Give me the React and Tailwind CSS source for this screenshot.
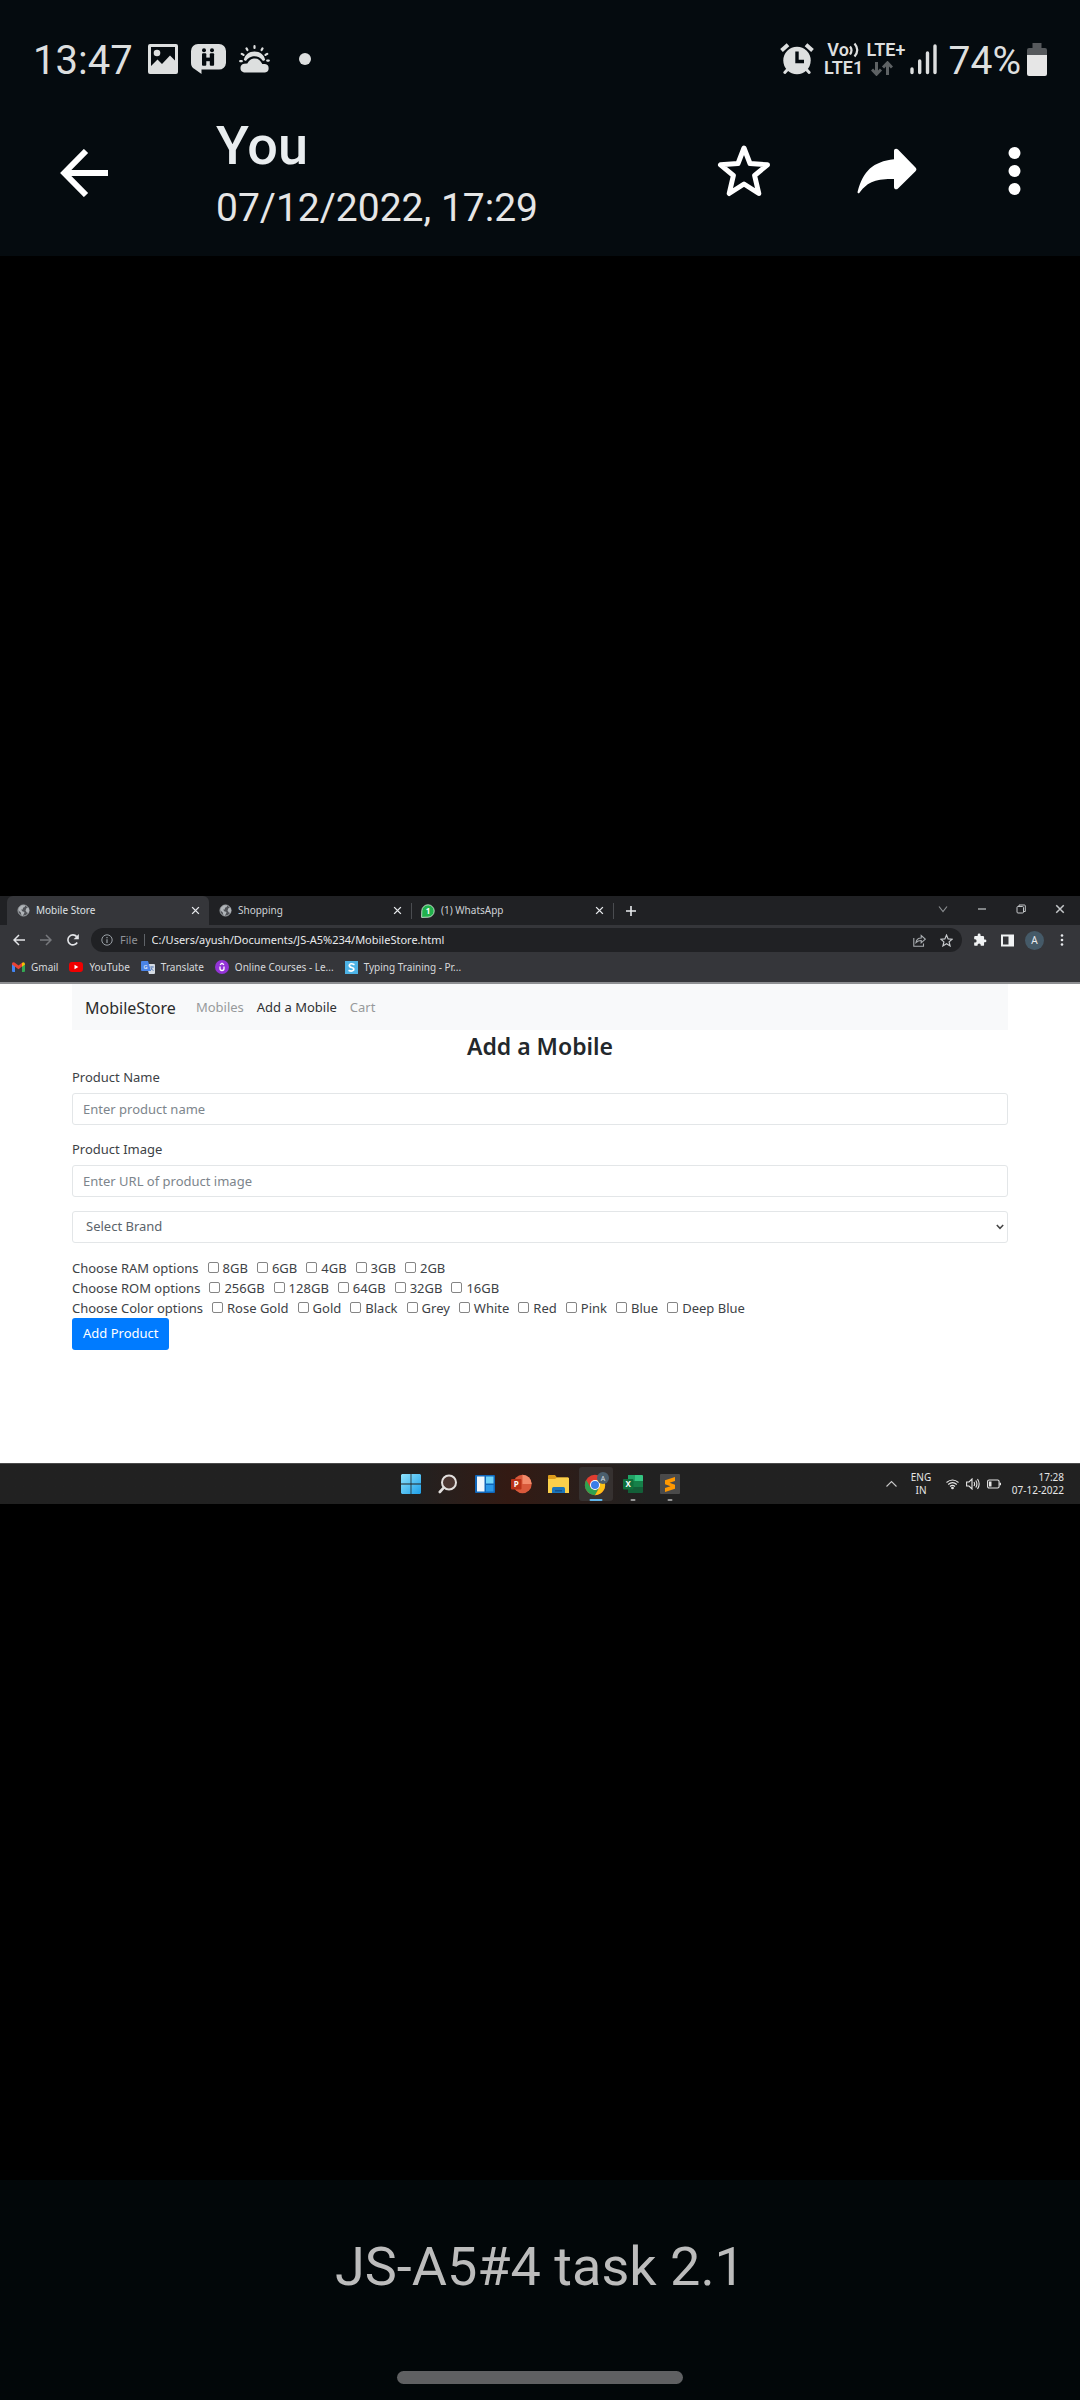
import React from "react";

const ui = "font-['Noto_Sans','Open_Sans',sans-serif]";

/* ---------- phone status bar icons ---------- */

function PictureIcon() {
  return (
    <svg className="h-[30px] w-[30px]" viewBox="0 0 30 30" aria-hidden="true">
      <path fill="#dddfdf" fillRule="evenodd" d="M2 0H28a2 2 0 0 1 2 2V28a2 2 0 0 1-2 2H2a2 2 0 0 1-2-2V2a2 2 0 0 1 2-2ZM3 3V22L9.500 15.500 14 20 22 11.500 27 16.500V3Z" />
      <circle cx="9" cy="9" r="3.300" fill="#dddfdf" />
    </svg>
  );
}

function HBubbleIcon() {
  return (
    <svg className="h-[30px] w-[35px]" viewBox="0 0 35 30" aria-hidden="true">
      <path fill="#dddfdf" d="M7 0H28a7 7 0 0 1 7 7V19a7 7 0 0 1-7 6.500H10.500V30L3.500 25A7 7 0 0 1 0 19V7A7 7 0 0 1 7 0Z" />
      <g fill="#050b0f">
        <circle cx="13" cy="6.300" r="2" />
        <circle cx="21" cy="6.300" r="2" />
        <rect x="11" y="9.300" width="4.300" height="12.500" rx="1" />
        <rect x="18.800" y="9.300" width="4.300" height="12.500" rx="1" />
        <rect x="14" y="13.600" width="6" height="3.600" />
      </g>
    </svg>
  );
}

function WeatherIcon() {
  return (
    <svg className="h-[28px] w-[31px]" viewBox="0 0 31 28" aria-hidden="true">
      <g stroke="#dddfdf" strokeWidth="2.200" strokeLinecap="round">
        <path d="M15.500 1.200V3M7.500 3.400 8.400 5M23.500 3.400 22.600 5M2.800 8.800 4.500 9.900M28.200 8.800 26.500 9.900M1.200 16.200H2.800M29.800 15.600H28.200" />
      </g>
      <path fill="#dddfdf" d="M4.800 15C6 9.500 10 6.500 15.500 6.500S25 9.500 26.200 15L24 16C21.500 12.500 18.500 11.200 15.500 11.200S8.500 13 7 16Z" />
      <path fill="#dddfdf" d="M5 27.500A4.500 4.500 0 0 1 5 18.700L8.300 18.600C10.500 14.500 13 13.500 15.800 13.500 19.500 13.500 21.500 15.500 23.300 19H26A4.300 4.300 0 0 1 26 27.500Z" />
    </svg>
  );
}

function AlarmIcon() {
  return (
    <svg className="h-[32px] w-[34px]" viewBox="0 0 34 32" aria-hidden="true">
      <g stroke="#dddfdf" strokeWidth="4">
        <path d="M1.500 7.500 8 1.800M32.500 7.500 26 1.800" />
        <path strokeWidth="3" strokeLinecap="round" d="M8 26 4.800 29.500M26 26 29.200 29.500" />
      </g>
      <circle cx="17" cy="17.500" r="13.700" fill="#dddfdf" />
      <path d="M17 8.500V18.500H24" fill="none" stroke="#050b0f" strokeWidth="3.400" />
    </svg>
  );
}

function SignalIcon() {
  return (
    <svg className="h-[31px] w-[27px]" viewBox="0 0 27 31" aria-hidden="true">
      <g stroke="#dddfdf" strokeWidth="3.400" strokeLinecap="round">
        <path d="M2 25V28.500M9.700 17V28.500M17.500 9V28.500M25 2V28.500" />
      </g>
    </svg>
  );
}

function DataArrows() {
  return (
    <svg className="h-[15px] w-[22px]" viewBox="0 0 22 15" aria-hidden="true">
      <path d="M5.500 1V13M1 8.500 5.500 13.200 10 8.500M16.500 14V2M12 6.500 16.500 1.800 21 6.500" fill="none" stroke="#5e6264" strokeWidth="3" />
    </svg>
  );
}

function BatteryIcon() {
  return (
    <svg className="h-[33px] w-[20px]" viewBox="0 0 20 33" aria-hidden="true">
      <path fill="#56595c" d="M5.500 0H14.500V5H18a2 2 0 0 1 2 2V14H0V7A2 2 0 0 1 2 5H5.500Z" />
      <path fill="#e6e6e6" d="M0 12H20V31a2 2 0 0 1-2 2H2a2 2 0 0 1-2-2Z" />
    </svg>
  );
}

function StatusBar() {
  return (
    <div className="flex h-12 items-center justify-between pl-[33px] pr-[33px] text-[#dddfdf]">
      <div className="flex items-center">
        <span className="w-[115px] text-[40px] leading-[48px]">13:47</span>
        <div className="flex items-center gap-[13px] pb-1">
          <PictureIcon />
          <HBubbleIcon />
          <WeatherIcon />
          <span className="ml-4 h-3 w-3 rounded-full bg-[#dddfdf]" />
        </div>
      </div>
      <div className="flex items-center">
        <span className="pb-1"><AlarmIcon /></span>
        <div className="ml-[11px] flex gap-1 pb-1 font-['Roboto',sans-serif] text-[18px] font-semibold leading-[18px]">
          <div className="flex w-[38px] flex-col items-center">
            <span className="flex h-[18px] items-center">
              Vo
              <svg className="h-[16px] w-[11px]" viewBox="0 0 11 16" aria-hidden="true">
                <path d="M1 4.500Q4 8 1 12.500M5.500 1.500Q11 8 5.500 14.500" fill="none" stroke="#dddfdf" strokeWidth="2.200" />
              </svg>
            </span>
            <span className="h-[18px]">LTE1</span>
          </div>
          <div className="flex w-9 flex-col">
            <span className="h-[18px] whitespace-nowrap">LTE+</span>
            <span className="flex h-[18px] items-center pl-1"><DataArrows /></span>
          </div>
        </div>
        <span className="ml-[7px] pb-1"><SignalIcon /></span>
        <span className="ml-3 text-[39px] leading-[48px]">74%</span>
        <span className="ml-[6px] pb-1"><BatteryIcon /></span>
      </div>
    </div>
  );
}

function ViewerHeader() {
  return (
    <header className="bg-[#050b0f] pb-[26px] pt-[37px]">
      <StatusBar />
      <div className="mt-[31px] flex items-center pl-[60px] pr-[59px]">
        <button type="button" aria-label="Back" className="mr-[108px]">
          <svg className="h-[48px] w-[48px]" viewBox="0 0 48 48" fill="none" stroke="#fff" strokeWidth="6" aria-hidden="true">
            <path d="M48 24H6M26 2 4.300 24 26 46" />
          </svg>
        </button>
        <div className="flex-1">
          <h1 className="text-[54px] font-medium leading-[60px] text-[#e9edef]">You</h1>
          <p className="mt-[10px] text-[39px] leading-[44px] text-[#e6e6e6]">07/12/2022, 17:29</p>
        </div>
        <div className="flex items-center pb-1">
          <button type="button" aria-label="Star message">
            <svg className="h-[52px] w-[54px]" viewBox="0 0 54 52" fill="none" stroke="#fff" strokeWidth="5" strokeLinejoin="round" aria-hidden="true">
              <path d="M27 3 33 18.500 50.500 19.800 37.600 30.500 41.800 48.500 27 39 12.200 48.500 16.400 30.500 3.500 19.800 21 18.500Z" />
            </svg>
          </button>
          <button type="button" aria-label="Share" className="ml-[86px]">
            <svg className="h-[46px] w-[60px]" viewBox="0 0 60 46" fill="#fff" aria-hidden="true">
              <path d="M37 11.200V3C37 .500 39.500 0 41 1.500L58.500 19.500C59.700 20.800 59.700 22 58.500 23.300L41 40.500C39.500 42 37 41.500 37 39V31C20 31 11 33 2.500 44.800 1.500 46 .200 45 .600 43.800 6 23 16 13.500 37 11.200Z" />
            </svg>
          </button>
          <button type="button" aria-label="More options" className="ml-[91px]">
            <svg className="h-[50px] w-[13px]" viewBox="0 0 13 50" fill="#fff" aria-hidden="true">
              <circle cx="6.500" cy="7" r="6" />
              <circle cx="6.500" cy="25" r="6" />
              <circle cx="6.500" cy="43" r="6" />
            </svg>
          </button>
        </div>
      </div>
    </header>
  );
}

/* ---------- browser chrome ---------- */

function Globe() {
  return (
    <svg className="h-[13px] w-[13px] shrink-0" viewBox="0 0 13 13" aria-hidden="true">
      <circle cx="6.500" cy="6.500" r="5.500" fill="#505257" stroke="#a4a8ac" strokeWidth="1" />
      <path fill="#b0b4b8" d="M4.800 1.200 8 1.300 7.800 3 6 3.800 5.800 5.500H4.200L5.200 7.200 7.500 8 7 9.800 5.500 12 4.200 10.500 3.800 8.500 1.200 6.200 2.200 3.200ZM9.500 4 11.500 3.800 12.300 6.500 11.500 9 9.800 8.500 8.500 6.500Z" />
    </svg>
  );
}

function ChatFavicon() {
  return (
    <svg className="h-[14px] w-[14px] shrink-0" viewBox="0 0 14 14" aria-hidden="true">
      <path fill="#22b14c" stroke="#dff5e4" strokeWidth=".8" d="M.6 13.400.800 6.800A6.200 6.200 0 1 1 7 13.200Z" />
      <text x="7" y="10" fill="#fff" fontSize="8" fontWeight="700" textAnchor="middle" fontFamily="Noto Sans">1</text>
    </svg>
  );
}

function CrossIcon({ size }) {
  return (
    <svg className={size} viewBox="0 0 8 8" fill="none" stroke="currentColor" strokeWidth="1.200" aria-hidden="true">
      <path d="M1 1 7 7M7 1 1 7" />
    </svg>
  );
}

function Tab({ icon, title, active, divider }) {
  return (
    <div className={"flex h-[29px] w-[202px] items-center pl-[10px] pr-[8px] text-[10px] " + (active ? "rounded-t-[6px] bg-[#35363a] text-[#dfe1e5]" : "text-[#cfd2d6]")}>
      <button type="button" className="flex flex-1 items-center gap-[6px] text-left">
        {icon}
        <span className="whitespace-nowrap">{title}</span>
      </button>
      <button type="button" aria-label={"Close " + title} className="text-[#e8eaed]">
        <CrossIcon size="h-[9px] w-[9px]" />
      </button>
      <span className={"-mr-[9px] ml-[9px] h-4 w-px " + (divider ? "bg-[#4a4c50]" : "")} />
    </div>
  );
}

function TabStrip() {
  return (
    <div className="flex h-[29px] items-center bg-[#202124] pl-[7px]">
      <Tab active icon={<Globe />} title="Mobile Store" />
      <Tab divider icon={<Globe />} title="Shopping" />
      <Tab divider icon={<ChatFavicon />} title="(1) WhatsApp" />
      <button type="button" aria-label="New tab" className="ml-[13px]">
        <svg className="h-[10px] w-[10px]" viewBox="0 0 10 10" stroke="#e8eaed" strokeWidth="1.600" aria-hidden="true">
          <path d="M5 0V10M0 5H10" />
        </svg>
      </button>
      <div className="ml-auto flex items-center gap-[29px] pb-1 pr-[15px] text-[#c4c7c9]">
        <button type="button" aria-label="Search tabs">
          <svg className="h-[10px] w-[10px]" viewBox="0 0 10 10" fill="none" stroke="#8b8e91" strokeWidth="1.200" aria-hidden="true"><path d="M1 2.500 5 7.500 9 2.500" /></svg>
        </button>
        <button type="button" aria-label="Minimise">
          <svg className="h-[10px] w-[10px]" viewBox="0 0 10 10" stroke="currentColor" strokeWidth="1.200" aria-hidden="true"><path d="M1 5H9" /></svg>
        </button>
        <button type="button" aria-label="Restore">
          <svg className="h-[10px] w-[10px]" viewBox="0 0 10 10" fill="none" stroke="currentColor" strokeWidth="1" aria-hidden="true"><rect x="1" y="2.500" width="6.500" height="6.500" rx="1" /><path d="M3 2V1H8.500Q9.300 1 9.300 2V7.500H8" /></svg>
        </button>
        <button type="button" aria-label="Close window"><CrossIcon size="h-[10px] w-[10px]" /></button>
      </div>
    </div>
  );
}

function Toolbar() {
  return (
    <div className="flex h-[30px] items-center pl-[13px] pr-[16px]">
      <div className="flex w-[78px] shrink-0 items-center gap-[15px]">
        <button type="button" aria-label="Back">
          <svg className="h-[12px] w-[12px]" viewBox="0 0 12 12" fill="none" stroke="#e3e5e8" strokeWidth="1.500" aria-hidden="true"><path d="M12 6H1M6 1 1 6 6 11" /></svg>
        </button>
        <button type="button" aria-label="Forward">
          <svg className="h-[12px] w-[12px]" viewBox="0 0 12 12" fill="none" stroke="#77797d" strokeWidth="1.500" aria-hidden="true"><path d="M0 6H11M6 1 11 6 6 11" /></svg>
        </button>
        <button type="button" aria-label="Reload">
          <svg className="h-[12px] w-[12px]" viewBox="0 0 12 12" fill="none" stroke="#e3e5e8" strokeWidth="1.600" aria-hidden="true"><path d="M10.200 8.500A5 5 0 1 1 9.700 2.600" /><path d="M11.800 0V5.200H6.600Z" fill="#e3e5e8" stroke="none" /></svg>
        </button>
      </div>
      <div className="flex h-6 flex-1 items-center rounded-full bg-[#202124] pl-[10px] pr-[9px] text-[11px]">
        <svg className="h-[12px] w-[12px]" viewBox="0 0 12 12" fill="none" stroke="#9aa0a6" aria-hidden="true"><circle cx="6" cy="6" r="5.200" /><path d="M6 5.200V9M6 3V4.200" strokeWidth="1.200" /></svg>
        <label htmlFor="address" className="ml-[7px] text-[#8f9398]">File</label>
        <span className="ml-[6px] h-3 w-px bg-[#5f6368]" />
        <input id="address" type="text" defaultValue="C:/Users/ayush/Documents/JS-A5%234/MobileStore.html" className="ml-[7px] min-w-0 flex-1 bg-transparent text-[#e8eaed] outline-none" />
        <button type="button" aria-label="Share page">
          <svg className="h-[13px] w-[13px]" viewBox="0 0 13 13" fill="none" stroke="#a9adb1" strokeWidth="1.100" aria-hidden="true"><path d="M.800 4V12.200H10.500V9.500M3 8.500C3.500 5.500 5.500 4 8.200 4V1.500L12.300 5.200 8.200 8.800V6.500C6 6.500 4.500 7 3 8.500Z" /></svg>
        </button>
        <button type="button" aria-label="Bookmark page" className="ml-[14px]">
          <svg className="h-[13px] w-[13px]" viewBox="0 0 24 24" fill="none" stroke="#c8cbce" strokeWidth="2.200" aria-hidden="true"><path d="M12 2 15 9 22.500 9.600 16.800 14.500 18.600 22 12 18 5.400 22 7.200 14.500 1.500 9.600 9 9Z" /></svg>
        </button>
      </div>
      <div className="flex shrink-0 items-center pl-[11px]">
        <button type="button" aria-label="Extensions">
          <svg className="h-[14px] w-[14px]" viewBox="0 0 24 24" fill="#f1f3f4" aria-hidden="true"><path d="M20.500 11H19V7a2 2 0 0 0-2-2h-4V3.500a2.500 2.500 0 0 0-5 0V5H4a2 2 0 0 0-2 2v3.800h1.500a2.700 2.700 0 0 1 0 5.400H2V20a2 2 0 0 0 2 2h3.800v-1.500a2.700 2.700 0 0 1 5.400 0V22H17a2 2 0 0 0 2-2v-4h1.500a2.500 2.500 0 0 0 0-5Z" /></svg>
        </button>
        <button type="button" aria-label="Side panel" className="ml-[14px]">
          <svg className="h-[13px] w-[13px]" viewBox="0 0 13 13" aria-hidden="true"><path fill="#f1f3f4" fillRule="evenodd" d="M0 .500H13V12.500H0ZM2 2.500V10.500H7.500V2.500Z" /></svg>
        </button>
        <button type="button" aria-label="Profile" className="ml-[11px] flex h-[19px] w-[19px] items-center justify-center rounded-full bg-[#455a68] text-[10px] text-[#e8eaed]">A</button>
        <button type="button" aria-label="Browser menu" className="ml-4">
          <svg className="h-[12px] w-[4px]" viewBox="0 0 4 12" fill="#e8eaed" aria-hidden="true"><circle cx="2" cy="1.500" r="1.300" /><circle cx="2" cy="6" r="1.300" /><circle cx="2" cy="10.500" r="1.300" /></svg>
        </button>
      </div>
    </div>
  );
}

const bookmarks = [
  {
    title: "Gmail",
    icon: (
      <svg className="h-[10px] w-[13px]" viewBox="0 0 13 10" aria-hidden="true">
        <path fill="#4285f4" d="M0 1.500 3 3.500V10H1Q0 10 0 9Z" />
        <path fill="#34a853" d="M13 1.500 10 3.500V10H12Q13 10 13 9Z" />
        <path fill="#ea4335" d="M0 2Q0-.500 2.500.500L6.500 3.500 10 .800V4.500L6.500 7.200 0 2.500Z" />
        <path fill="#fbbc04" d="M10 .800Q12.500-.800 13 2V2.500L10 4.800Z" />
      </svg>
    ),
  },
  {
    title: "YouTube",
    icon: (
      <svg className="h-[10px] w-[14px]" viewBox="0 0 14 10" aria-hidden="true">
        <rect width="14" height="10" rx="3" fill="#f00000" />
        <path d="M5.500 2.800 9.300 5 5.500 7.200Z" fill="#fff" />
      </svg>
    ),
  },
  {
    title: "Translate",
    icon: (
      <svg className="h-[13px] w-[14px]" viewBox="0 0 14 13" aria-hidden="true">
        <path fill="#d5dbe3" d="M5 3H13Q14 3 14 4V12Q14 13 13 13H8Z" />
        <path fill="#4a84e8" d="M1 0H7L10 10H1Q0 10 0 9V1Q0 0 1 0Z" />
        <text x="4.500" y="7.500" fontSize="6" fill="#fff" textAnchor="middle" fontFamily="Roboto">G</text>
        <path d="M9 6H13M11 5V6Q11 9 9 10M10 7 12.500 10" stroke="#5b7fb8" strokeWidth=".8" fill="none" />
      </svg>
    ),
  },
  {
    title: "Online Courses - Le...",
    icon: (
      <svg className="h-[14px] w-[14px]" viewBox="0 0 14 14" aria-hidden="true">
        <circle cx="7" cy="7" r="7" fill="#9333d6" />
        <path d="M5 6.500V8.500Q5 10.500 7 10.500T9 8.500V6.500M5 4.700 7 3.200 9 4.700" fill="none" stroke="#fff" strokeWidth="1.300" />
      </svg>
    ),
  },
  {
    title: "Typing Training - Pr...",
    icon: (
      <svg className="h-[13px] w-[13px]" viewBox="0 0 13 13" aria-hidden="true">
        <rect width="13" height="13" fill="#4db3e6" />
        <path d="M9.500 3.700Q5 1.500 4.300 4.300 4.200 6 6.700 6.500T8.700 9Q6.800 11 3.500 9.300" fill="none" stroke="#fff" strokeWidth="1.700" />
      </svg>
    ),
  },
];

function BookmarksBar() {
  return (
    <nav aria-label="Bookmarks" className="flex h-[29px] items-center gap-[11px] border-b-2 border-[#8e8f92] pb-[3px] pl-[12px] text-[10px] text-[#d7d9dc]">
      {bookmarks.map((b) => (
        <a key={b.title} href="#" className="flex items-center gap-[6px] whitespace-nowrap">
          {b.icon}
          {b.title}
        </a>
      ))}
    </nav>
  );
}

/* ---------- web page ---------- */

const optionGroups = [
  { legend: "Choose RAM options", options: ["8GB", "6GB", "4GB", "3GB", "2GB"] },
  { legend: "Choose ROM options", options: ["256GB", "128GB", "64GB", "32GB", "16GB"] },
  { legend: "Choose Color options", options: ["Rose Gold", "Gold", "Black", "Grey", "White", "Red", "Pink", "Blue", "Deep Blue"] },
];

function TextField({ id, label, placeholder }) {
  return (
    <div className="mb-[14px]">
      <label htmlFor={id} className="mb-[6px] block leading-5">{label}</label>
      <input id={id} type="text" placeholder={placeholder} className="block h-8 w-full rounded-[3px] border border-[#e3e6e8] bg-white px-[10px] text-[#495057] outline-none placeholder:text-[#7d858c]" />
    </div>
  );
}

function StorePage() {
  return (
    <div className="bg-white px-[72px] pb-[113px] text-[13px] text-[#3d4246]">
      <nav className="flex h-[46px] items-center gap-[13px] bg-[#f8f9fa] px-[13px] pt-[2px]">
        <a href="#" className="mr-[7px] text-[16px] text-[#2b2b2b]">MobileStore</a>
        <a href="#" className="text-[#97999b]">Mobiles</a>
        <a href="#" className="text-[#2f3133]">Add a Mobile</a>
        <a href="#" className="text-[#97999b]">Cart</a>
      </nav>
      <h2 className="mb-[5px] text-center text-[23px] font-semibold leading-8 text-[#23282c]">Add a Mobile</h2>
      <form onSubmit={(e) => e.preventDefault()}>
        <TextField id="name" label="Product Name" placeholder="Enter product name" />
        <TextField id="image" label="Product Image" placeholder="Enter URL of product image" />
        <div className="relative mb-[15px]">
          <select aria-label="Brand" className="block h-8 w-full appearance-none rounded-[3px] border border-[#e3e6e8] bg-white px-[13px] text-[#5c646b] outline-none">
            <option>Select Brand</option>
          </select>
          <svg className="pointer-events-none absolute right-[4px] top-3 h-[8px] w-[8px]" viewBox="0 0 8 8" fill="none" stroke="#444" strokeWidth="1.500" aria-hidden="true"><path d="M.800 2 4 5.300 7.200 2" /></svg>
        </div>
        {optionGroups.map((g) => (
          <div key={g.legend} role="group" aria-label={g.legend} className="flex h-5 items-center gap-[9px] whitespace-nowrap leading-5">
            <span>{g.legend}</span>
            {g.options.map((o) => (
              <label key={o} className="flex items-center gap-1">
                <input type="checkbox" className="mb-[2px] h-[11px] w-[11px] appearance-none rounded-[2px] border border-[#858585] bg-white checked:bg-[#007bff]" />
                {o}
              </label>
            ))}
          </div>
        ))}
        <button type="submit" className="h-8 rounded-[3px] bg-[#007bff] px-[11px] text-white">Add Product</button>
      </form>
    </div>
  );
}

/* ---------- Windows taskbar ---------- */

const apps = [
  {
    name: "Start",
    icon: (
      <svg className="h-[20px] w-[20px]" viewBox="0 0 20 20" aria-hidden="true">
        <defs><linearGradient id="win" x1="0" y1="0" x2="1" y2="1"><stop offset="0" stopColor="#8fe3fc" /><stop offset="1" stopColor="#1d9fe8" /></linearGradient></defs>
        <path fill="url(#win)" d="M1 0H9.600V9.600H0V1ZM10.400 0H19L20 1V9.600H10.400ZM0 10.400H9.600V20H1L0 19ZM10.400 10.400H20V19L19 20H10.400Z" />
      </svg>
    ),
  },
  {
    name: "Search",
    icon: (
      <svg className="h-[20px] w-[20px]" viewBox="0 0 20 20" fill="none" stroke="#e2dfdd" aria-hidden="true">
        <circle cx="11" cy="8.500" r="7" strokeWidth="2" fill="#4b3631" />
        <path d="M5.800 13.700 1.800 18" strokeWidth="2.600" strokeLinecap="round" />
      </svg>
    ),
  },
  {
    name: "Widgets",
    icon: (
      <svg className="h-[20px] w-[20px]" viewBox="0 0 20 20" aria-hidden="true">
        <rect y="1" width="20" height="18" rx="1" fill="#1066ba" />
        <rect x="2" y="2.500" width="7.500" height="15" fill="#f0f7fd" />
        <rect x="11" y="2.500" width="7.500" height="7" fill="#6fd4fa" />
        <rect x="11" y="11" width="7.500" height="6.500" fill="#2b98e8" />
      </svg>
    ),
  },
  {
    name: "PowerPoint",
    icon: (
      <svg className="h-[20px] w-[21px]" viewBox="0 0 21 20" aria-hidden="true">
        <circle cx="11.500" cy="10" r="9.200" fill="#d9593b" />
        <path d="M11.500.800A9.200 9.200 0 0 1 20.700 10H11.500Z" fill="#f38b6b" />
        <rect x="0" y="5" width="10.500" height="10.500" rx="1" fill="#b93218" />
        <text x="5.200" y="13" fontSize="8" fontWeight="700" fill="#fff" textAnchor="middle" fontFamily="Noto Sans">P</text>
      </svg>
    ),
  },
  {
    name: "File Explorer",
    icon: (
      <svg className="h-[20px] w-[21px]" viewBox="0 0 21 20" aria-hidden="true">
        <path fill="#dc9c1c" d="M0 2Q0 1 1 1H7L9 3.500H20V8H0Z" />
        <path fill="#fbd04b" d="M0 5H7L9 3.500H20Q21 3.500 21 4.500V19H0Z" />
        <path fill="#1b75bb" d="M4 19V14.500Q4 13 5.500 13H15.500Q17 13 17 14.500V19Z" />
        <path fill="#12528f" d="M7 16H14V17.500H7Z" />
      </svg>
    ),
  },
  {
    name: "Chrome",
    active: true,
    mark: "bg-[#60b5ea] w-[13px]",
    icon: (
      <svg className="h-[26px] w-[26px]" viewBox="0 0 26 26" aria-hidden="true">
        <circle cx="12" cy="14" r="10.200" fill="#e03d30" />
        <path d="M3.200 8.900A10.200 10.200 0 0 0 12 24.200L16.400 16.500 12 19 7.600 16.500Z" fill="#2fa14f" />
        <path d="M12 24.200A10.200 10.200 0 0 0 20.800 8.900H12L16.400 11.500V16.500Z" fill="#fbc116" />
        <circle cx="12" cy="14" r="5" fill="#fff" />
        <circle cx="12" cy="14" r="4" fill="#3b7de8" />
        <circle cx="20" cy="7" r="6" fill="#4b5f6d" />
        <text x="20" y="9.700" fontSize="7" fill="#d8dfe4" textAnchor="middle" fontFamily="Noto Sans">A</text>
      </svg>
    ),
  },
  {
    name: "Excel",
    mark: "bg-[#969696] w-[5px]",
    icon: (
      <svg className="h-[20px] w-[20px]" viewBox="0 0 20 20" aria-hidden="true">
        <path d="M5 1H12V7H5Z" fill="#21a366" />
        <path d="M12 1H19Q20 1 20 2V7H12Z" fill="#33c481" />
        <path d="M5 7H20V13H5Z" fill="#168049" />
        <path d="M5 13H20V18Q20 19 19 19H5Z" fill="#135f38" />
        <rect x="0" y="5" width="10.500" height="10.500" rx="1" fill="#0f703b" />
        <text x="5.200" y="13" fontSize="8" fontWeight="700" fill="#fff" textAnchor="middle" fontFamily="Noto Sans">X</text>
      </svg>
    ),
  },
  {
    name: "Sublime Text",
    mark: "bg-[#969696] w-[5px]",
    icon: (
      <svg className="h-[20px] w-[20px]" viewBox="0 0 20 20" aria-hidden="true">
        <rect width="20" height="20" rx="1" fill="#4a4a4a" />
        <path fill="#ff9800" d="M15 3V7L9.500 8.800 15 10.700V14.700L5 18V14L10.500 12.200 5 10.300V6.300Z" />
      </svg>
    ),
  },
];

function Taskbar() {
  return (
    <div className="grid h-[41px] grid-cols-[1fr_auto_1fr] items-center border-t border-[#4a4a4a] bg-linear-to-r from-[#212121] from-38% via-[#331a13] via-47% to-[#212121] to-60% text-[10px] leading-[13px] text-[#e6e6e6]">
      <span />
      <div className="flex">
        {apps.map((a) => (
          <button key={a.name} type="button" aria-label={a.name} className="flex h-[34px] w-[37px] items-center justify-center">
            <span className={"relative flex h-[34px] w-[34px] items-center justify-center rounded-[3px] " + (a.active ? "bg-[#363130]" : "")}>
              {a.icon}
              {a.mark && <span className={"absolute bottom-0 left-1/2 h-[2px] -translate-x-1/2 rounded-full " + a.mark} />}
            </span>
          </button>
        ))}
      </div>
      <div className="flex items-center justify-end pr-4">
        <button type="button" aria-label="Hidden icons">
          <svg className="h-[8px] w-[11px]" viewBox="0 0 11 8" fill="none" stroke="#c8c8c8" strokeWidth="1.100" aria-hidden="true"><path d="M.500 6.500 5.500 1.500 10.500 6.500" /></svg>
        </button>
        <span className="ml-[13px] w-[22px] text-center">ENG<br />IN</span>
        <div className="ml-[14px] flex items-center gap-[7px]">
          <svg className="h-[12px] w-[13px]" viewBox="0 0 13 12" fill="none" stroke="#e6e6e6" strokeWidth="1.100" aria-hidden="true">
            <path d="M.500 4.500Q6.500-.500 12.500 4.500M2.200 6.500Q6.500 2.800 10.800 6.500M4 8.500Q6.500 6.300 9 8.500" />
            <circle cx="6.500" cy="10" r=".8" fill="#e6e6e6" />
          </svg>
          <svg className="h-[12px] w-[14px]" viewBox="0 0 14 12" fill="none" stroke="#e6e6e6" strokeWidth="1.100" aria-hidden="true">
            <path d="M.600 4V8H3L6 11V1L3 4ZM8 4Q9.200 6 8 8M9.800 2.500Q12 6 9.800 9.500M11.500 1Q14.800 6 11.500 11" />
          </svg>
          <svg className="h-[10px] w-[14px]" viewBox="0 0 14 10" fill="none" stroke="#e6e6e6" strokeWidth="1.100" aria-hidden="true">
            <rect x=".600" y="1" width="11.500" height="8" rx="1.500" />
            <path d="M13.300 3.800V6.200" strokeWidth="1.400" />
            <rect x="2" y="2.500" width="2.500" height="5" fill="#e6e6e6" stroke="none" />
          </svg>
        </div>
        <span className="w-[63px] whitespace-nowrap text-right">17:28<br />07-12-2022</span>
      </div>
    </div>
  );
}

function DesktopCapture() {
  return (
    <section className={ui}>
      <div className="bg-[#35363a]">
        <TabStrip />
        <Toolbar />
        <BookmarksBar />
      </div>
      <StorePage />
      <Taskbar />
    </section>
  );
}

export default function App() {
  return (
    <div className="flex min-h-screen flex-col bg-black font-['Roboto',sans-serif]">
      <ViewerHeader />
      <main className="flex flex-1 flex-col justify-center pb-9">
        <DesktopCapture />
      </main>
      <footer className="flex flex-col items-center bg-[#020709] pb-4 pt-[55px]">
        <p className="text-[54px] leading-[64px] text-[#bcbcbc]">JS-A5#4 task 2.1</p>
        <div className="mt-[72px] h-[13px] w-[286px] rounded-full bg-[#5f6062]" />
      </footer>
    </div>
  );
}
